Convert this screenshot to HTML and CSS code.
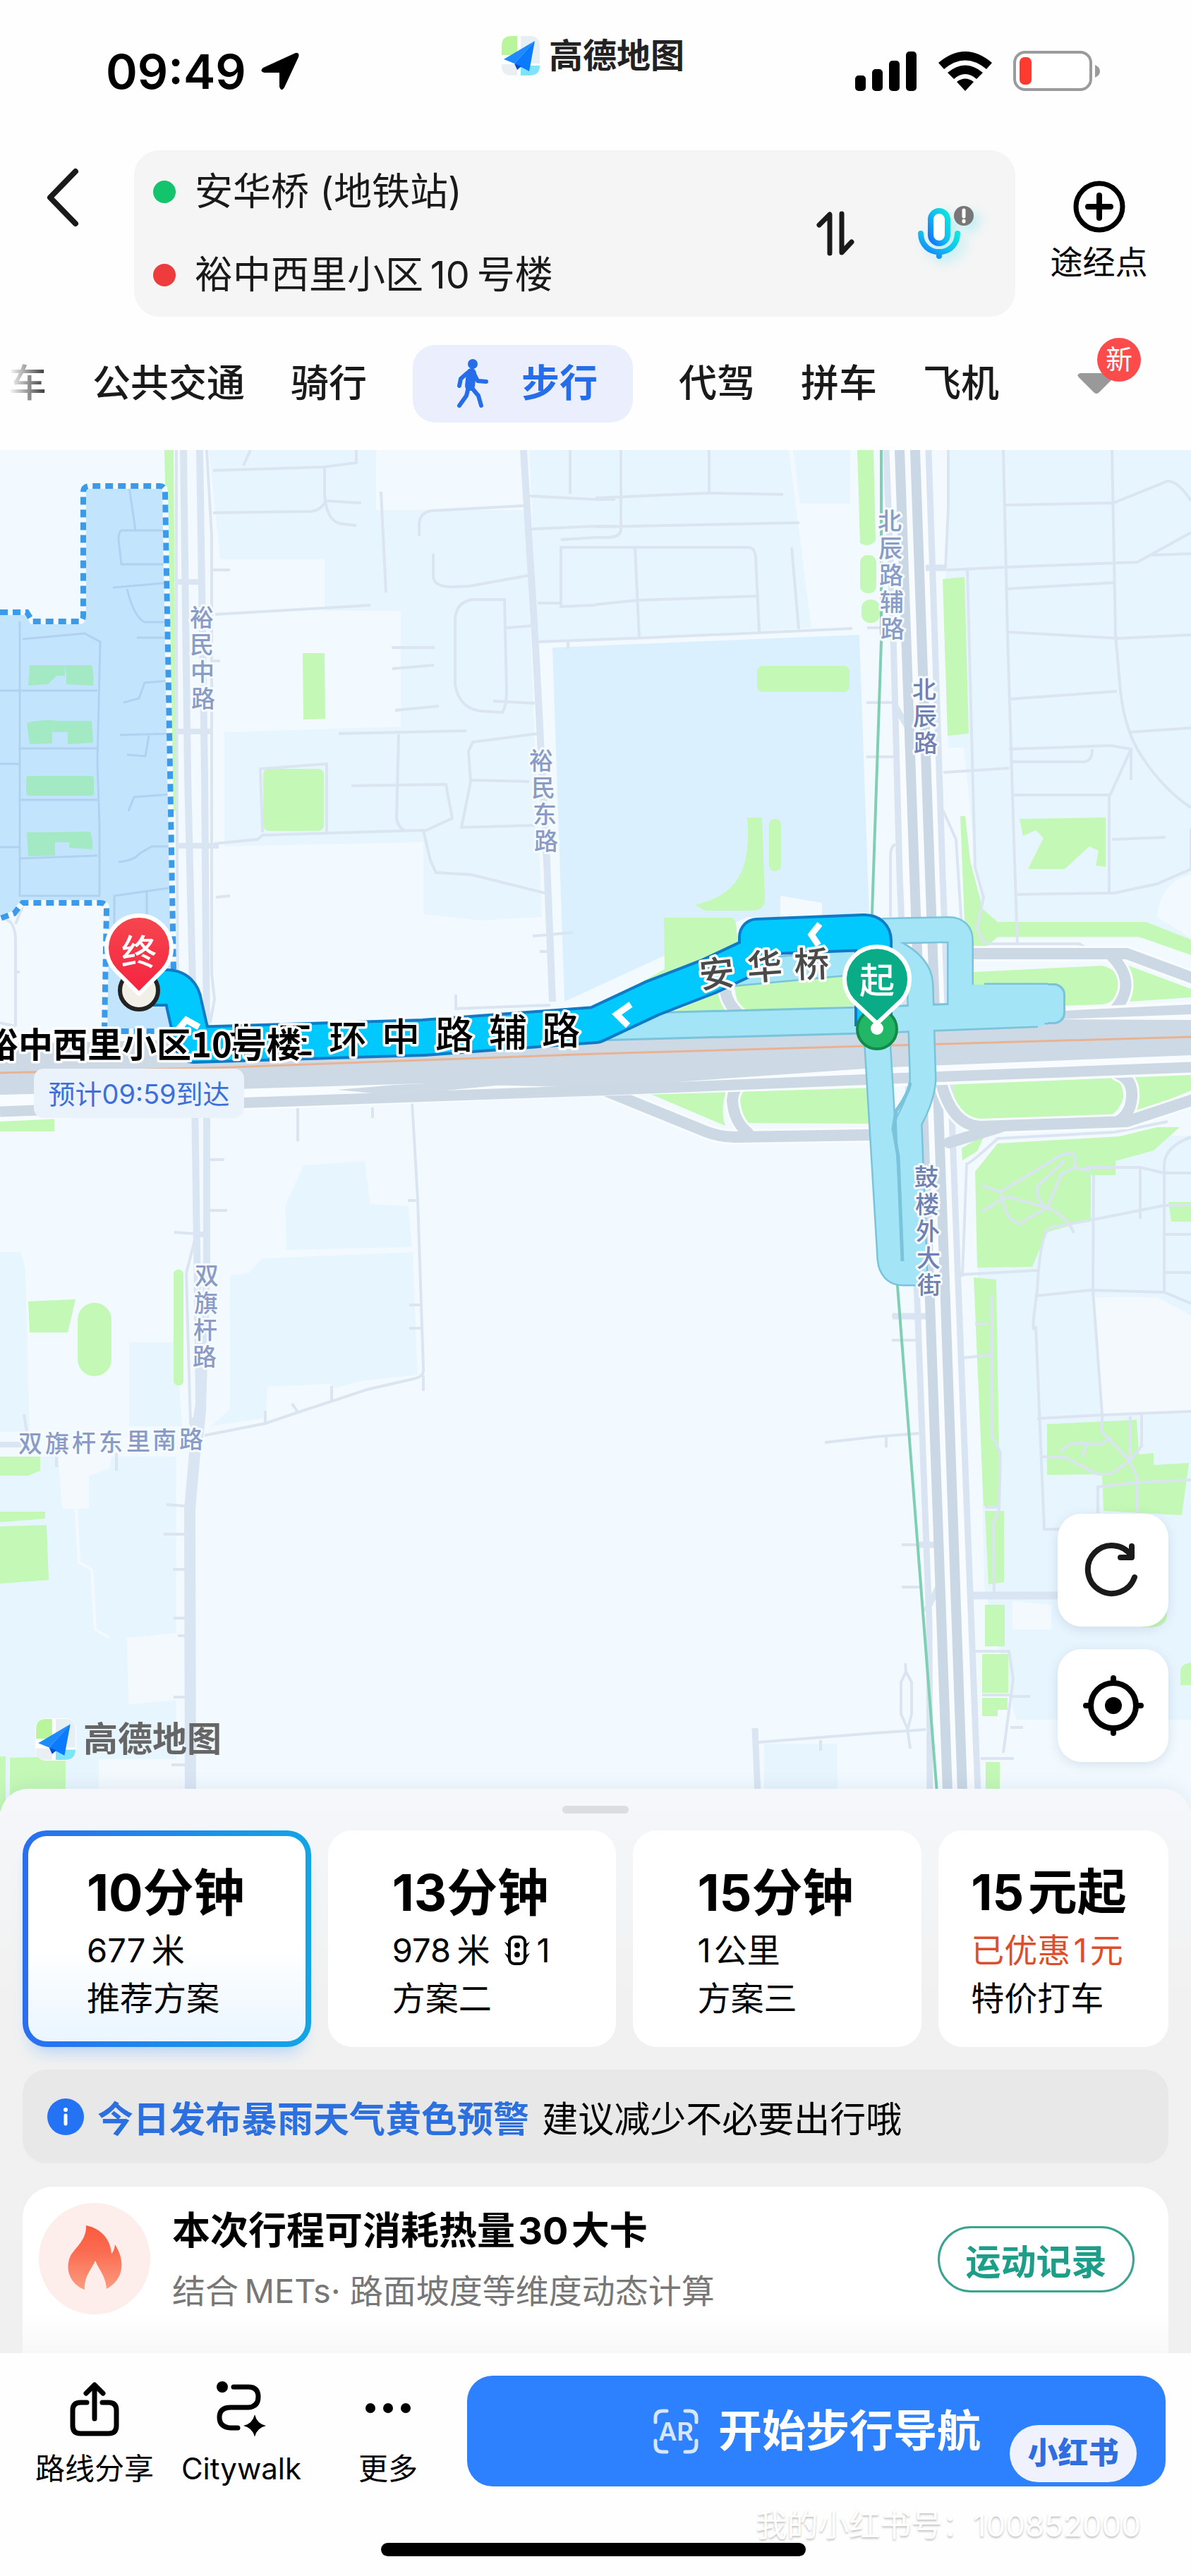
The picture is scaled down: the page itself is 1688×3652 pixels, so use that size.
FILE: index.html
```html
<!DOCTYPE html>
<html lang="zh-CN">
<head>
  <meta charset="utf-8">
  <meta name="viewport" content="width=device-width, initial-scale=1">
  <title>步行路线 - 高德地图</title>
  <link rel="stylesheet" href="styles.css">
</head>
<body>
  <!-- shared logo, used in the status bar and on the map -->
  <svg class="defs" width="0" height="0" aria-hidden="true">
    <symbol id="amap-logo" viewBox="0 0 56 58">
      <rect width="56" height="58" rx="15" fill="#fff"/>
      <path d="M15 1H23V28H1V15Q1 1 15 1Z" fill="#b9f59a"/>
      <path d="M28 1H41Q55 1 55 15V40H28Z" fill="#e6eff4"/>
      <path d="M1 41H23V57H15Q1 57 1 44Z" fill="#e9eff3"/>
      <path d="M28 43H55Q55 57 41 57H28Z" fill="#7fe3fb"/>
      <path d="M48 8L4 34L19 40Z" fill="#1d8bff"/>
      <path d="M48 8L19 40L40 51Z" fill="#0a7bff"/>
      <path d="M19 40L23 49L29 44Z" fill="#0a4bd0"/>
    </symbol>
  </svg>

  <header class="top">
    <div class="status">
      <div class="status-left">
        <span class="time">09:49</span>
        <svg width="56" height="56" viewBox="0 0 56 56"><path d="M50 2Q56 1 54 8L34 51Q30 58 27 50V30H6Q-2 28 4 23Z"/></svg>
      </div>
      <div class="brand">
        <svg width="56" height="58"><use href="#amap-logo"/></svg>
        <span>高德地图</span>
      </div>
      <div class="status-right">
        <svg width="88" height="56" viewBox="0 0 88 56">
          <rect x="0" y="34" width="15" height="22" rx="5"/>
          <rect x="24" y="25" width="15" height="31" rx="5"/>
          <rect x="48" y="13" width="15" height="43" rx="5"/>
          <rect x="72" y="0" width="15" height="56" rx="5"/>
        </svg>
        <svg width="76" height="56" viewBox="0 0 76 56">
          <path d="M0 16Q38 -16 76 16L68 25Q38 0 8 25Z"/>
          <path d="M13 30Q38 9 63 30L54 39Q38 25 22 39Z"/>
          <path d="M26 43Q38 34 50 43L38 56Z"/>
        </svg>
        <svg width="124" height="58" viewBox="0 0 124 58">
          <rect x="2" y="2" width="108" height="53" rx="15" fill="#fff" stroke="#9b9b9b" stroke-width="4"/>
          <rect x="9" y="9" width="17" height="39" rx="7" fill="#ff3b30"/>
          <path d="M116 20Q123 23 123 29T116 38Z" fill="#9b9b9b"/>
        </svg>
      </div>
    </div>

    <div class="route-row">
      <button class="back" aria-label="返回">
        <svg width="48" height="84" viewBox="0 0 48 84"><path d="M42 5L6 42L42 79" fill="none" stroke="#1a1a1a" stroke-width="8" stroke-linecap="round" stroke-linejoin="round"/></svg>
      </button>
      <div class="route-box">
        <div class="route-fields">
          <label class="route-field"><i class="dot dot-start"></i><input type="text" aria-label="起点" value="安华桥 (地铁站)"></label>
          <label class="route-field"><i class="dot dot-end"></i><input type="text" aria-label="终点" value="裕中西里小区&thinsp;10&thinsp;号楼"></label>
        </div>
        <button class="swap" aria-label="交换起终点">
          <svg width="54" height="64" viewBox="0 0 54 64"><path d="M4 20L19 5V60M36 4V59L50 44" fill="none" stroke="#1a1a1a" stroke-width="7" stroke-linecap="round" stroke-linejoin="round"/></svg>
        </button>
        <button class="voice" aria-label="语音">
          <svg width="84" height="84" viewBox="0 0 84 84">
            <defs>
              <linearGradient id="mic" x1="0" y1="1" x2="1" y2="0"><stop offset="0" stop-color="#1470ff"/><stop offset=".5" stop-color="#12bdf0"/><stop offset="1" stop-color="#0ee6dc"/></linearGradient>
            </defs>
            <g fill="none" stroke="url(#mic)" stroke-width="8" stroke-linecap="round">
              <rect x="18" y="10" width="24" height="46" rx="12" fill="#fff"/>
              <path d="M4 42C5 77 55 77 56 42M30 68V74"/>
            </g>
            <circle cx="65" cy="17" r="14" fill="#777"/>
            <path d="M65 9V18M65 24V25" stroke="#fff" stroke-width="5" stroke-linecap="round"/>
          </svg>
        </button>
      </div>
      <button class="waypoint">
        <svg width="76" height="76" viewBox="0 0 76 76"><circle cx="38" cy="38" r="33" fill="none" stroke="#000" stroke-width="7"/><path d="M38 22V54M22 38H54" stroke="#000" stroke-width="8" stroke-linecap="round"/></svg>
        <span>途经点</span>
      </button>
    </div>

    <nav class="modes">
      <a href="#" class="mode mode-cut">车</a>
      <a href="#" class="mode">公共交通</a>
      <a href="#" class="mode">骑行</a>
      <a href="#" class="mode mode-active">
        <svg width="46" height="70" viewBox="0 0 46 70">
          <circle cx="23" cy="7" r="7" fill="#256de9"/>
          <path d="M21 20L19 38" stroke="#256de9" stroke-width="14" stroke-linecap="round"/>
          <path d="M15 20L6 28L4 38M25 21L30 31L42 32M17 40L14 52L4 66M21 40L31 52L35 66" fill="none" stroke="#256de9" stroke-width="6" stroke-linecap="round" stroke-linejoin="round"/>
        </svg>
        步行
      </a>
      <a href="#" class="mode">代驾</a>
      <a href="#" class="mode">拼车</a>
      <a href="#" class="mode">飞机</a>
      <button class="more-modes" aria-label="更多出行方式">
        <svg width="54" height="30" viewBox="0 0 54 30"><path d="M4 0H50Q56 2 52 6L31 27Q27 31 23 27L2 6Q-2 2 4 0Z" fill="#999"/></svg>
        <span class="badge-new">新</span>
      </button>
    </nav>
  </header>

  <main class="map">
    <svg class="map-canvas" viewBox="0 638 1688 1930" role="img" aria-label="步行路线地图">
      <defs>
        <linearGradient id="end-pin" x1="0" y1="0" x2="0" y2="1"><stop offset="0" stop-color="#f5474f"/><stop offset="1" stop-color="#f5233f"/></linearGradient>
      </defs>
      <rect y="638" width="1688" height="1930" fill="#f2faff"/>

      <!-- blocks -->
      <g fill="#e7f5fe">
        <path d="M296 638H533V723H745L768 1300L680 1305L600 1296V1194L318 1200V1038L568 1030V866H460V793H312Z"/>
        <path d="M750 638H1118L1150 890L762 912ZM1124 638H1205V714H1134Z"/>
        <path d="M1345 638H1688V1240Q1645 1250 1640 1300L1688 1330H1395L1375 1150L1366 1060H1344L1340 820Z"/>
        <path d="M404 1710L430 1652L517 1646L525 1707L579 1710L584 1768L406 1772Z"/>
        <path d="M326 1808L352 1805L371 1784L585 1775L592 1949L511 1958L474 1968L468 1962L379 1966L377 2010L299 2022L326 1998Z"/>
        <path d="M0 1775H30L36 1800L42 2030H0ZM183 1903H250L258 2022H183ZM0 2065H250V2568H0Z"/>
        <path d="M1383 1660L1640 1610H1688V2438H1440L1395 2250Z"/>
        <path d="M1083 2472H1187V2568H1083Z"/>
      </g>
      <path d="M783 918L1218 900L1232 1300H1060L800 1420Z" fill="#daf0ff"/>
      <path d="M1106 1270L1165 1280V1300H1106ZM83 2065H158L155 2082L126 2092V2139H88ZM180 2322L258 2314V2410L182 2416ZM140 2494H260V2568H140ZM1549 1839H1640L1688 1865V2004H1560ZM1435 2270L1490 2275V2310H1435Z" fill="#f3f9fd"/>
      <path d="M108 2139L112 2215L130 2225L135 2310L155 2322" fill="none" stroke="#f3f9fd" stroke-width="4"/>

      <!-- green land -->
      <g fill="#c3f8b6">
        <path d="M233 638H246L250 1150H245Z"/>
        <path d="M429 926H460L461 1019L430 1020Z"/>
        <rect x="373" y="1090" width="86" height="88" rx="8"/>
        <rect x="1073" y="944" width="131" height="37" rx="8"/>
        <path d="M1215 638H1238L1241 766Q1232 778 1219 770Z"/>
        <rect x="1219" y="787" width="23" height="54" rx="10"/>
        <rect x="1221" y="850" width="26" height="33" rx="12"/>
        <path d="M1336 821L1367 818L1373 1040L1343 1043Z"/>
        <path d="M985 1283C1040 1270 1066 1240 1059 1159H1080L1084 1275Q1083 1291 1066 1291H1000Z"/>
        <rect x="1090" y="1161" width="17" height="74" rx="8"/>
        <path d="M941 1301H1036Q1044 1302 1044 1320L1048 1345L950 1400H895L942 1374Z"/>
        <path d="M950 1436L1022 1406L1031 1435ZM1040 1396L1199 1384L1215 1426L1048 1434Z"/>
        <path d="M1361 1157H1368L1375 1220L1393 1289L1414 1307H1624L1688 1332V1354L1614 1328H1414L1390 1350L1368 1330Z"/>
        <path d="M1445 1161L1567 1159V1229L1553 1227L1557 1206L1544 1200L1509 1232H1457L1479 1188L1468 1177L1450 1185Z"/>
        <path d="M1380 1378L1562 1369Q1587 1375 1587 1398Q1580 1424 1560 1424L1380 1430Z"/>
        <path d="M1597 1368L1688 1402V1414L1600 1420Q1614 1395 1597 1368Z"/>
        <path d="M917 1549L1030 1543Q1020 1575 1028 1596ZM1054 1541L1234 1534V1593L1056 1592Q1040 1568 1054 1541Z"/>
        <path d="M1336 1533L1572 1521Q1592 1530 1592 1556Q1584 1584 1560 1584L1382 1588Q1350 1570 1336 1533ZM1608 1525L1688 1518V1546L1606 1580Q1616 1550 1608 1525Z"/>
        <path d="M1363 1628L1396 1608L1385 1632L1364 1645Z"/>
        <path d="M1382 1661L1414 1621L1587 1611L1640 1598H1672L1635 1631L1581 1646V1666H1546V1729L1484 1747L1463 1796L1385 1797Z"/>
        <path d="M1656 1704H1688V1732H1660ZM1380 1811L1412 1814L1417 2135H1394ZM1396 2142H1423V2243L1401 2246Z"/>
        <path d="M1484 2019L1611 2013L1614 2062L1635 2060V2077L1685 2074L1675 2148L1564 2142L1562 2090L1484 2091Z"/>
        <path d="M1396 2275H1424V2334H1396ZM1392 2345H1429V2400H1392ZM1392 2407H1428V2424H1414V2433H1392ZM1397 2498H1417V2568H1397Z"/>
        <path d="M1688 2357Q1673 2359 1673 2370V2389H1688ZM1620 2285H1654Q1655 2307 1630 2307H1620Z"/>
        <path d="M0 1586H77V1604H0ZM40 1845L107 1842L96 1889H42ZM0 2065H57V2085L40 2092H0ZM0 2143H64V2153L0 2158ZM0 2164L66 2162L69 2240L0 2245ZM14 2492L93 2490V2568H14ZM0 2490H8V2568H0Z"/>
        <rect x="110" y="1847" width="48" height="104" rx="24"/>
        <rect x="246" y="1800" width="14" height="164" rx="6"/>
      </g>

      <!-- lanes and alleys -->
      <g fill="none" stroke="#dae5f1" stroke-width="4">
        <path d="M250 638V900L252 1480M293 638L300 760V1380L304 1417L298 1450M302 667L460 662V700Q462 735 480 742L505 745M460 662L505 656V638M302 727L440 725Q455 724 462 710L512 713M345 660L355 638M302 808H326M305 871L525 858M302 937H312M540 697L547 840"/>
        <path d="M594 760V742Q596 726 612 724L742 717M614 785V818Q616 832 640 832L665 831L748 816M715 850H668Q645 855 645 880V970Q650 1003 680 1008L712 1010Q718 1000 718 980ZM718 890L755 887M699 994L758 997M555 918H616M556 948L615 943M560 1007L622 1001M480 1040L661 1036M565 1041L562 1160Q565 1175 575 1178M498 1114L632 1112L641 1160L602 1178M762 1040L670 1052L664 1065L667 1108L654 1173L760 1170M667 1106L750 1108"/>
        <path d="M304 1196L365 1190L372 1184L600 1177L610 1220L618 1237L668 1240L772 1266M372 1180L369 1090L463 1083V1180M306 1272L326 1270M646 1410V1430L780 1425M755 1327L812 1322M765 1349H776"/>
        <path d="M750 703L844 708H872M808 638V700M753 750L844 746H875M795 765L844 762M844 776H795V860L844 858M762 855H796M762 910L920 904L1208 891M805 910V920M844 706L1004 699L1110 701M1005 638V699M880 638V752Q878 762 860 762L844 762M844 747L1133 741M844 776H1060Q1070 776 1071 790L1076 895M900 776L906 905M844 857L903 851L1072 845M1122 776L1132 892"/>
        <path d="M1228 996H1268M1228 1073H1266M1229 890H1262M1269 1197Q1262 1200 1262 1215V1300M1344 638V720L1340 805M1312 805L1345 808L1425 804L1612 797L1688 755M1422 638L1428 900L1436 1160L1442 1340M1425 716L1578 713L1655 682Q1670 682 1688 710M1576 638L1581 900L1588 980Q1595 1040 1620 1075Q1650 1120 1688 1145M1425 835L1579 826M1428 896L1586 905L1688 900M1432 991L1583 980M1600 1038L1688 1032M1430 1062L1575 1057L1603 1062L1572 1130V1265M1434 1080H1535Q1548 1080 1548 1062M1434 1127H1572M1337 1095L1384 1092L1430 1089M1371 808L1382 1230L1394 1272L1385 1315Q1390 1335 1400 1338H1530L1548 1350M1576 1190L1652 1187M1442 1268L1580 1266L1640 1253L1688 1232M1603 1062V1106M1640 1253L1688 1232V1175M1632 787L1688 785M1337 1150L1355 1190L1364 1330"/>
        <path d="M422 1570V1618M528 1570V1585M584 1562L592 1700L600 1940Q602 1952 585 1955L520 1970L423 2002L376 2018L290 2035M600 1950V1972M578 1702H590M580 1850H598M580 1883H598M470 1965V1986M414 1990L422 2002M376 2000V2020M296 1644H318M296 1716H322M247 1747L290 1750M264 1805L278 1750M264 1805L270 2020M34 2005L38 2030M165 2060V2085M80 2060V2080M236 2133L262 2135M232 2175H262M245 2225H262M246 2294H262M252 2319H262M246 2406H262M243 2502H262"/>
        <path d="M1062 1365V1395M1364 1810L1370 1650Q1375 1650 1414 1614L1580 1605L1655 1590M1362 1807L1470 1801M1470 1830Q1460 1900 1468 1880L1480 2168H1600M1470 1837L1546 1829L1650 1832L1688 1848M1470 1830Q1474 1745 1490 1740L1550 1729L1650 1709L1688 1708M1550 1665L1549 1830L1562 2005V2030L1600 2070L1612 2095V2145M1470 2011L1562 2006L1688 2001M1650 1832V1650Q1652 1625 1688 1612M1616 1655V1728M1540 1655L1616 1655L1650 1663H1688M1652 1750H1688M1652 1804H1688M1474 2065L1510 2066L1555 2090H1575L1602 2070V2008M1503 2060Q1510 2045 1530 2046L1560 2048L1575 2038M1534 2066L1540 2048M1618 2005V2050L1602 2070M1556 2145V2108L1610 2102L1688 2098M1365 1925L1405 1921M1382 1877H1400M1406 1835V2035L1418 2060L1416 2140L1408 2160L1409 2265M1396 2137H1418M1380 2341H1430L1436 2380L1422 2485M1434 2405H1460M1392 2403H1434M1432 2449H1450M1390 2493H1437"/>
        <path d="M1392 1718L1420 1700L1430 1697L1480 1711Q1510 1720 1522 1748M1392 1680L1418 1690L1500 1640Q1530 1625 1523 1655L1504 1665L1485 1711L1445 1735Q1425 1730 1418 1690M1523 1655L1545 1660M1510 1645L1472 1680Q1465 1690 1480 1711"/>
        <path d="M1169 2045L1240 2037L1303 2032M1256 2035V2052M1264 1866L1312 1870M1264 1900H1300M1278 2190H1326M1278 2250H1306M1283 2358L1284 2370L1277 2385V2430L1286 2450L1290 2479M1284 2370L1292 2385V2430L1287 2450M1075 2470L1240 2457L1312 2452M1163 2467V2482"/>
        <path d="M0 1303Q20 1300 22 1330V1455M20 1378H28M0 1450L22 1455M22 1310L34 1280"/>
      </g>

      <!-- destination compound -->
      <path d="M0 868H38L46 881H112Q118 881 118 872V698Q118 689 128 689H226Q234 689 234 698L246 1375V1462H148L151 1288Q151 1280 142 1280H32L20 1295L0 1302Z" fill="#c3e4fd"/>
      <g fill="none" stroke="#b0d2f0" stroke-width="3">
        <path d="M28 881V1270H141V1170L138 1080L142 910L120 898L32 906M0 979H138M28 1061H138M28 1134H138M28 1217L138 1213M0 1083H28M0 1201H28"/>
        <path d="M183 690L192 752M232 752H172Q168 755 168 765L172 800H234M160 833L240 826M180 835Q190 875 205 882H242M194 904H242M175 996L197 990L205 968L240 965M170 1042L244 1040M211 1043L206 1072L180 1070M242 1126L190 1130L182 1150M168 1222Q190 1220 198 1210L215 1200H246M162 1350V1270L246 1258M208 1262V1310"/>
      </g>
      <g fill="#a3e9c4">
        <path d="M42 943H92V958H80L68 970L40 972ZM92 943H130Q134 957 132 972L94 970V956Z"/>
        <path d="M38 1025Q60 1019 84 1022H130L132 1053L96 1055V1038H74V1054L42 1055Z"/>
        <rect x="37" y="1100" width="96" height="28" rx="4"/>
        <path d="M38 1180L128 1179Q132 1190 131 1204L98 1202V1194H78V1213L40 1214Z"/>
      </g>
      <path class="compound-edge-under" d="M0 868H38L46 881H112Q118 881 118 872V698Q118 689 128 689H226Q234 689 234 698L246 1375V1462H148L151 1288Q151 1280 142 1280H32L20 1295L0 1302"/>
      <path class="compound-edge" d="M0 868H38L46 881H112Q118 881 118 872V698Q118 689 128 689H226Q234 689 234 698L246 1375V1462H148L151 1288Q151 1280 142 1280H32L20 1295L0 1302"/>

      <!-- side streets -->
      <g fill="none" stroke="#dae5f3" stroke-width="10">
        <path d="M260 638L266 1100L275 1480L282 1990L274 2040M283 638L290 1100L293 1480V1800L287 2000L282 2050"/>
        <path d="M742 638L759 915L775 1221L783 1420"/>
        <path d="M0 2048H30M250 825H285M252 1037H300M250 1199H310M277 1750H295" stroke-width="8"/>
        <path d="M278 2010L276 2060L269 2140L270 2568" stroke-width="16"/>
        <path d="M1070 2450L1075 2568" stroke-width="9"/>
        <path d="M1360 2262H1520" stroke-width="11"/>
      </g>

      <!-- north-south trunk road -->
      <path d="M1285 638L1307 1240L1329 1845L1353 2568" fill="none" stroke="#f8fcff" stroke-width="66"/>
      <g fill="none">
        <path d="M1256 638L1266 900L1275 1240L1300 1845L1317 2300L1318 2568M1316 638L1336 1240L1359 1845L1387 2568M1268 1000L1292 1040M1312 2285L1330 2250M1312 805H1340M1265 1866H1312M1300 2190H1330" stroke="#d9e4f3" stroke-width="9"/>
        <path d="M1275 638L1296 1240L1318 1845L1344 2568M1297 638L1318 1240L1340 1845L1365 2568" stroke="#cad7e4" stroke-width="14"/>
      </g>
      <path d="M1249 638V909L1236 1295L1272 1823L1330 2568" fill="none" stroke="#7fcfb3" stroke-width="4"/>

      <!-- third ring road -->
      <g fill="none" stroke-linecap="round">
        <g stroke="#f8fcff" stroke-width="22">
          <path d="M1377 1352H1597L1710 1394M1576 1356Q1614 1395 1578 1434M1028 1395Q1026 1420 1050 1440M1075 1530Q1040 1530 1038 1560Q1040 1590 1060 1606M1584 1522Q1606 1530 1604 1556Q1602 1580 1584 1590M850 1543L1000 1604Q1020 1612 1043 1612L1231 1609M1334 1536Q1350 1596 1390 1597L1597 1590L1700 1556"/>
        </g>
        <g stroke="#ccd8e3" stroke-width="16">
          <path d="M1377 1352H1597L1710 1394M1576 1356Q1614 1395 1578 1434M1028 1395Q1026 1420 1050 1440M1075 1530Q1040 1530 1038 1560Q1040 1590 1060 1606M1584 1522Q1606 1530 1604 1556Q1602 1580 1584 1590M850 1543L1000 1604Q1020 1612 1043 1612L1231 1609M1334 1536Q1350 1596 1390 1597L1597 1590L1700 1556M1345 1620L1420 1597"/>
        </g>
      </g>
      <path d="M0 1476L600 1462L1240 1442L1688 1420V1524L1240 1542L844 1554L300 1576L0 1590Z" fill="#f8fcff"/>
      <path d="M0 1480L600 1466L1240 1446L1688 1424V1438L1500 1445L1688 1446V1496L1240 1514L844 1542L600 1536L300 1545L0 1552Z" fill="#cdd9e4"/>
      <path d="M0 1576L300 1565L844 1546L1240 1530L1688 1513" fill="none" stroke="#ccd8e4" stroke-width="15"/>
      <path d="M478 1545L560 1538L844 1525L560 1553Z" fill="#cdd9e4"/>
      <path d="M0 1521L300 1514L844 1494L1688 1470" fill="none" stroke="#e9b293" stroke-width="3"/>

      <!-- alternative routes -->
      <g fill="none" stroke-linejoin="round">
        <g stroke="#79c3db">
          <path d="M860 1456L1240 1446L1470 1437" stroke-width="40"/>
          <path d="M1395 1423H1485" stroke-width="59"/>
          <rect x="1440" y="1394" width="70" height="58" rx="16" fill="#79c3db" stroke="none"/>
          <path d="M1040 1380L1255 1360M1250 1320L1345 1318Q1361 1318 1361 1334V1430" stroke-width="38"/>
          <path d="M1243 1470L1262 1785Q1264 1804 1280 1804H1296L1288 1590Q1307 1555 1308 1530L1304 1395Q1302 1365 1255 1345" stroke-width="39"/>
        </g>
        <g stroke="#a3e5f6">
          <path d="M860 1456L1240 1446L1480 1437" stroke-width="34"/>
          <path d="M1365 1423H1485" stroke-width="54"/>
          <rect x="1440" y="1397" width="67" height="52" rx="14" fill="#a3e5f6" stroke="none"/>
          <path d="M1040 1380L1255 1360M1250 1320L1345 1318Q1361 1318 1361 1334V1430" stroke-width="33"/>
          <path d="M1243 1470L1262 1785Q1264 1804 1280 1804H1296L1288 1590Q1307 1555 1308 1530L1304 1395Q1302 1365 1255 1345" stroke-width="34"/>
        </g>
        <path d="M1290 1535Q1288 1550 1270 1575L1266 1600L1273 1640L1279 1788" stroke="#79c3db" stroke-width="5"/>
      </g>

      <!-- chosen route -->
      <g fill="none" stroke-linejoin="round">
        <path d="M196 1400H236Q258 1400 261 1424L274 1481L600 1471L844 1453L925 1415L1005 1384L1073 1352V1328L1225 1322Q1238 1322 1238 1334V1455" stroke="#0f7ac6" stroke-width="54"/>
        <path d="M196 1400H236Q258 1400 261 1424L274 1481L600 1471L844 1453L925 1415L1005 1384L1073 1352V1328L1225 1322Q1238 1322 1238 1334V1455" stroke="#02c9fd" stroke-width="46"/>
        <path d="M252 1460L264 1446L282 1456M894 1424L874 1438L890 1454M1162 1310L1150 1325L1160 1340" stroke="#fff" stroke-width="9" stroke-linejoin="miter"/>
      </g>

      <!-- street names -->
      <g class="street">
        <text x="269 269 270 271" y="888 926 965 1003">裕民中路</text>
        <text x="750 753 755 757" y="1091 1129 1167 1205">裕民东路</text>
        <text x="1244 1245 1246 1247 1248" y="751 790 828 866 904">北辰路辅路</text>
        <text x="276 275 274 273" y="1821 1860 1898 1936">双旗杆路</text>
        <text x="26 64 102 140 179 216 254" y="2059 2059 2058 2057 2056 2054 2053">双旗杆东里南路</text>
      </g>
      <g class="street street-main">
        <text x="1293 1294 1295" y="990 1028 1066">北辰路</text>
        <text x="1296 1297 1298 1299 1300" y="1681 1720 1758 1796 1834">鼓楼外大街</text>
      </g>
      <text class="ring-name" x="316 391 466 541 617 693 768" y="1497 1495 1493 1490 1487 1484 1481">北三环中路辅路</text>
      <text class="bridge-name" x="993 1060 1126" y="1401 1390 1386" rotate="-6 -4 -2">安华桥</text>

      <!-- end point -->
      <circle cx="197" cy="1404" r="27" fill="#f1efe8" stroke="#222" stroke-width="6"/>
      <path d="M197 1409L164 1376A46 46 0 1 1 230 1376Z" fill="url(#end-pin)" stroke="#fff" stroke-width="6" stroke-linejoin="round"/>
      <text class="pin-text" x="197" y="1368">终</text>
      <text class="place-name" x="-23" y="1499">裕中西里小区10号楼</text>
      <rect x="48" y="1515" width="298" height="70" rx="14" fill="#eaf2fc"/>
      <text class="eta" x="197" y="1565">预计09:59到达</text>

      <!-- start point -->
      <circle cx="1243" cy="1459" r="28" fill="#22b766" stroke="#138a49" stroke-width="4"/>
      <circle cx="1243" cy="1458" r="9" fill="#fff"/>
      <path d="M1243 1451L1208 1418A46 46 0 1 1 1278 1418Z" fill="#09ac86" stroke="#fff" stroke-width="6" stroke-linejoin="round"/>
      <text class="pin-text" x="1243" y="1408">起</text>
    </svg>

    <div class="map-brand">
      <svg width="58" height="60"><use href="#amap-logo"/></svg>
      <span>高德地图</span>
    </div>
    <div class="map-tools">
      <button class="tool" aria-label="刷新">
        <svg width="84" height="84" viewBox="0 0 84 84"><path d="M72 52A34 34 0 1 1 68 22M68 8V24H52" fill="none" stroke="#1a1a1a" stroke-width="8" stroke-linecap="round" stroke-linejoin="round"/></svg>
      </button>
      <button class="tool" aria-label="定位">
        <svg width="88" height="88" viewBox="0 0 88 88"><circle cx="44" cy="44" r="32" fill="none" stroke="#000" stroke-width="8"/><circle cx="44" cy="44" r="12"/><path d="M44 5V12M44 76V83M5 44H12M76 44H83" stroke="#000" stroke-width="8" stroke-linecap="round"/></svg>
      </button>
    </div>
  </main>

  <section class="sheet">
    <div class="handle"></div>
    <div class="plans">
      <button class="plan plan-active">
        <strong>10分钟</strong>
        <span>677&thinsp;米</span>
        <span>推荐方案</span>
      </button>
      <button class="plan">
        <strong>13分钟</strong>
        <span class="with-lights">978&thinsp;米
          <svg width="36" height="42" viewBox="0 0 36 42"><rect x="7" y="2" width="22" height="38" rx="7" fill="none" stroke="#000" stroke-width="4"/><path d="M0 9L6 12V18ZM0 25L6 28V34ZM36 9L30 12V18ZM36 25L30 28V34Z"/><circle cx="18" cy="14" r="4"/><circle cx="18" cy="27" r="4"/></svg>
          <i>1</i></span>
        <span>方案二</span>
      </button>
      <button class="plan">
        <strong>15分钟</strong>
        <span>1&hairsp;公里</span>
        <span>方案三</span>
      </button>
      <button class="plan plan-taxi">
        <strong>15&hairsp;元起</strong>
        <span class="discount">已优惠&hairsp;1&hairsp;元</span>
        <span>特价打车</span>
      </button>
    </div>

    <div class="notice">
      <svg width="52" height="52" viewBox="0 0 52 52"><circle cx="26" cy="26" r="26" fill="#2473f5"/><path d="M26 24V36" stroke="#fff" stroke-width="5" stroke-linecap="round"/><circle cx="26" cy="16" r="3" fill="#fff"/></svg>
      <p><b>今日发布暴雨天气黄色预警</b> 建议减少不必要出行哦</p>
    </div>

    <div class="burn">
      <svg width="158" height="158" viewBox="0 0 158 158">
        <defs><linearGradient id="fire" x1="0" y1="0" x2="0" y2="1"><stop offset="0" stop-color="#fa5a3c"/><stop offset=".4" stop-color="#fb6b50"/><stop offset="1" stop-color="#fb9c80"/></linearGradient></defs>
        <circle cx="79" cy="79" r="79" fill="#feeeeb"/>
        <path d="M67 32C88 36 102 52 103 72Q107 68 108 59C124 84 119 110 96 122C95 104 86 96 80 82C75 94 64 104 65 123C45 116 36 94 45 75C53 62 68 52 67 32Z" fill="url(#fire)"/>
      </svg>
      <div class="burn-text">
        <h2>本次行程可消耗热量&hairsp;30&hairsp;大卡</h2>
        <p>结合&thinsp;METs· 路面坡度等维度动态计算</p>
      </div>
      <button class="record">运动记录</button>
    </div>
  </section>

  <footer class="bottom">
    <div class="actions">
      <button class="action">
        <svg width="78" height="78" viewBox="0 0 78 78"><path d="M28 30H19Q8 30 8 41V63Q8 74 19 74H59Q70 74 70 63V41Q70 30 59 30H50M39 53V6M27 17L39 5L51 17" fill="none" stroke="#000" stroke-width="7" stroke-linecap="round" stroke-linejoin="round"/></svg>
        路线分享
      </button>
      <button class="action">
        <svg width="78" height="78" viewBox="0 0 78 78"><circle cx="12" cy="8" r="8"/><path d="M28 8H49Q63 8 63 22T49 37H24Q8 37 8 51T24 66H34" fill="none" stroke="#000" stroke-width="7" stroke-linecap="round"/><path d="M58 47Q61 60 74 63Q61 66 58 79Q55 66 42 63Q55 60 58 47Z"/></svg>
        Citywalk
      </button>
      <button class="action">
        <svg width="78" height="78" viewBox="0 0 78 78"><circle cx="14" cy="38" r="7"/><circle cx="39" cy="38" r="7"/><circle cx="64" cy="38" r="7"/></svg>
        更多
      </button>
      <button class="start">
        <svg width="66" height="66" viewBox="0 0 66 66"><path d="M4 20V14Q4 4 14 4H20M46 4H52Q62 4 62 14V20M62 46V52Q62 62 52 62H46M20 62H14Q4 62 4 52V46" fill="none" stroke="#d6e6ff" stroke-width="5" stroke-linecap="round"/><text class="ar" x="33" y="46">AR</text></svg>
        开始步行导航
        <span class="xhs">小红书</span>
      </button>
    </div>
    <p class="account">我的小红书号：100852000</p>
    <div class="home-bar"></div>
  </footer>
</body>
</html>
```
FILE: styles.css
```css
* {
  box-sizing: border-box;
}

body {
  margin: 0;
  min-height: 100vh;
  display: flex;
  flex-direction: column;
  font-family: Inter, "Noto Sans CJK SC", sans-serif;
  color: #000;
  background: #fff;
}

button {
  margin: 0;
  padding: 0;
  border: none;
  background: none;
  font: inherit;
  color: inherit;
}

svg {
  display: block;
  flex: none;
}

.defs {
  position: absolute;
}

/* header */
.top {
  background: #fefefe;
  padding-bottom: 39px;
}

.status {
  display: grid;
  grid-template-columns: 1fr auto 1fr;
  align-items: center;
  height: 202px;
  padding: 0 128px;
}

.status-left, .status-right, .brand {
  display: flex;
  align-items: center;
}

.status-left {
  gap: 20px;
  padding-left: 22px;
}

.status-right {
  justify-content: flex-end;
  gap: 30px;
}

.time {
  font-size: 68px;
  font-weight: 600;
  line-height: 84px;
}

.brand {
  align-self: start;
  gap: 12px;
  padding-top: 50px;
  padding-right: 8px;
  font-size: 48px;
  font-weight: 700;
  line-height: 58px;
  color: #222;
}

.route-row {
  display: grid;
  grid-template-columns: 190px 1fr 249px;
  margin-top: 11px;
}

.back {
  padding: 0 0 102px 65px;
}

.route-box {
  display: flex;
  align-items: center;
  padding: 0 54px 0 27px;
  border-radius: 36px;
  background: #f5f5f5;
}

.route-fields {
  flex: 1;
}

.route-field {
  display: flex;
  align-items: center;
  gap: 27px;
  height: 118px;
}

.route-field input {
  flex: 1;
  min-width: 0;
  padding: 0;
  border: none;
  outline: none;
  background: none;
  font: inherit;
  font-size: 54px;
  line-height: 80px;
  color: #1a1a1a;
}

.dot {
  width: 32px;
  height: 32px;
  border-radius: 50%;
}

.dot-start {
  background: #14c46c;
}

.dot-end {
  background: #ee3b3b;
}

.voice {
  margin-left: 90px;
  filter: drop-shadow(8px 8px 8px rgba(20, 220, 240, .25));
}

.waypoint {
  display: flex;
  flex-direction: column;
  align-items: center;
  padding-top: 42px;
  padding-right: 12px;
  font-size: 46px;
  line-height: 80px;
}

.modes {
  display: flex;
  align-items: center;
  gap: 65px;
  height: 110px;
  margin-top: 40px;
  padding-left: 12px;
}

.mode {
  font-size: 54px;
  font-weight: 500;
  line-height: 112px;
  white-space: nowrap;
  text-decoration: none;
  color: #1a1a1a;
}

.mode-cut {
  color: transparent;
  background: linear-gradient(90deg, #fff, #333);
  -webkit-background-clip: text;
  background-clip: text;
}

.mode-active {
  display: flex;
  align-items: center;
  gap: 46px;
  padding: 0 50px 0 62px;
  border-radius: 32px;
  background: #ebeffd;
  font-weight: 700;
  line-height: 110px;
  color: #256de9;
}

.more-modes {
  position: relative;
  margin-left: 46px;
}

.badge-new {
  position: absolute;
  left: 28px;
  bottom: 18px;
  width: 62px;
  height: 62px;
  border-radius: 50%;
  background: #fc4b4b;
  color: #fff;
  font-size: 38px;
  line-height: 60px;
}

/* map */
.map {
  position: relative;
}

.map-canvas {
  width: 100%;
  height: auto;
}

.compound-edge-under, .compound-edge {
  fill: none;
  stroke: #f2faff;
  stroke-width: 8;
}

.compound-edge {
  stroke: #3c9aeb;
  stroke-dasharray: 11 7;
}

.street {
  font-size: 34px;
  font-weight: 500;
  fill: #8a9bc6;
  stroke: #f6fbff;
  stroke-width: 6;
  stroke-linejoin: round;
  paint-order: stroke;
}

.street-main {
  fill: #6f80b3;
}

.ring-name, .bridge-name, .place-name {
  stroke: #fff;
  stroke-width: 7;
  stroke-linejoin: round;
  paint-order: stroke;
}

.ring-name {
  font-size: 54px;
  font-weight: 500;
}

.bridge-name {
  font-size: 50px;
  font-weight: 500;
  fill: #4a4a4a;
}

.place-name {
  font-family: "Noto Sans CJK SC", sans-serif;
  font-size: 49px;
  font-weight: 700;
}

.pin-text {
  font-size: 50px;
  font-weight: 500;
  fill: #fff;
  text-anchor: middle;
}

.eta {
  font-size: 38px;
  fill: #3c6fdc;
  text-anchor: middle;
}

.map-brand {
  position: absolute;
  left: 50px;
  bottom: 72px;
  display: flex;
  align-items: center;
  gap: 10px;
  font-size: 49px;
  font-weight: 700;
  line-height: 60px;
  color: #666;
}

.map-tools {
  position: absolute;
  right: 32px;
  bottom: 70px;
  display: flex;
  flex-direction: column;
  gap: 32px;
}

.tool {
  display: grid;
  place-items: center;
  width: 157px;
  height: 160px;
  border-radius: 34px;
  background: #fff;
  box-shadow: 0 4px 16px rgba(60, 90, 130, .15);
}

/* bottom sheet */
.sheet {
  position: relative;
  margin-top: -32px;
  padding: 24px 32px 0;
  border-radius: 40px 40px 0 0;
  background: linear-gradient(#f5f7fa, #f1f1f1 300px, #f0f0f0);
  box-shadow: 0 -4px 24px rgba(80, 110, 150, .1);
}

.handle {
  width: 94px;
  height: 11px;
  margin: 0 auto 24px;
  border-radius: 6px;
  background: #dcdde0;
}

.plans {
  display: grid;
  grid-template-columns: 409fr 409fr 409fr 326fr;
  gap: 24px;
}

.plan {
  display: flex;
  flex-direction: column;
  padding: 38px 0 27px 83px;
  border: 8px solid #fff;
  border-radius: 34px;
  background: #fff;
  font-size: 47px;
  line-height: 68px;
  text-align: left;
  white-space: nowrap;
}

.plan strong {
  margin-bottom: 6px;
  font-size: 72px;
  font-weight: 700;
  line-height: 84px;
}

.plan-active {
  border-color: transparent;
  background:
    linear-gradient(#fff 55%, #eaf5ff) padding-box,
    linear-gradient(90deg, #2b6ef2, #12a5e5) border-box;
  box-shadow: 0 18px 22px -12px rgba(90, 170, 255, .45);
}

.plan-taxi {
  padding-left: 38px;
}

.plan-taxi strong {
  font-size: 70px;
}

.discount {
  color: #dd4e2c;
}

.with-lights {
  display: flex;
  align-items: center;
  gap: 10px;
}

.with-lights svg {
  margin-left: 10px;
}

.with-lights i {
  font-style: normal;
}

.notice {
  display: flex;
  align-items: center;
  gap: 19px;
  height: 133px;
  margin-top: 32px;
  padding: 0 35px;
  border-radius: 34px;
  background: #e8e8e8;
  font-size: 51px;
}

.notice p {
  margin: 0;
}

.notice b {
  margin-right: 4px;
  color: #2b70de;
}

.burn {
  display: flex;
  align-items: flex-start;
  height: 236px;
  margin-top: 33px;
  padding: 23px 48px 0 23px;
  border-radius: 44px 44px 0 0;
  background: linear-gradient(#fff 75%, #f8f8f8);
}

.burn-text {
  flex: 1;
  margin-left: 31px;
}

.burn h2 {
  margin: 0;
  font-size: 54px;
  font-weight: 700;
  line-height: 80px;
}

.burn p {
  margin: 8px 0 0;
  font-size: 47px;
  line-height: 74px;
  color: #777;
}

.record {
  width: 279px;
  height: 94px;
  margin-top: 33px;
  border: 3px solid #3ba491;
  border-radius: 47px;
  font-size: 50px;
  font-weight: 700;
  color: #1d9e88;
}

/* footer */
.bottom {
  position: relative;
  flex: 1;
  padding: 32px 36px 0 30px;
  background: #fefefe;
}

.actions {
  display: grid;
  grid-template-columns: repeat(3, 208px) 1fr;
}

.action {
  display: flex;
  flex-direction: column;
  align-items: center;
  gap: 16px;
  padding-top: 8px;
  font-size: 42px;
  line-height: 60px;
}

.start {
  position: relative;
  display: flex;
  align-items: center;
  height: 157px;
  margin-left: 8px;
  padding-left: 263px;
  gap: 27px;
  border-radius: 36px;
  background: #2d81ff;
  color: #fff;
  font-size: 62px;
  font-weight: 700;
  line-height: 80px;
}

.ar {
  font-size: 36px;
  font-weight: 600;
  fill: #d6e6ff;
  text-anchor: middle;
}

.xhs {
  position: absolute;
  right: 41px;
  bottom: 6px;
  width: 180px;
  height: 81px;
  border-radius: 41px;
  background: #eff2fc;
  color: #2f6de0;
  font-size: 43px;
  font-weight: 900;
  line-height: 78px;
}

.account {
  position: absolute;
  right: 71px;
  bottom: 44px;
  margin: 0;
  font-size: 44px;
  line-height: 64px;
  color: #fff;
  text-shadow: 0 2px 3px rgba(0, 0, 0, .25);
}

.home-bar {
  width: 602px;
  height: 19px;
  margin: 75px auto 32px;
  border-radius: 10px;
  background: #000;
}
```
